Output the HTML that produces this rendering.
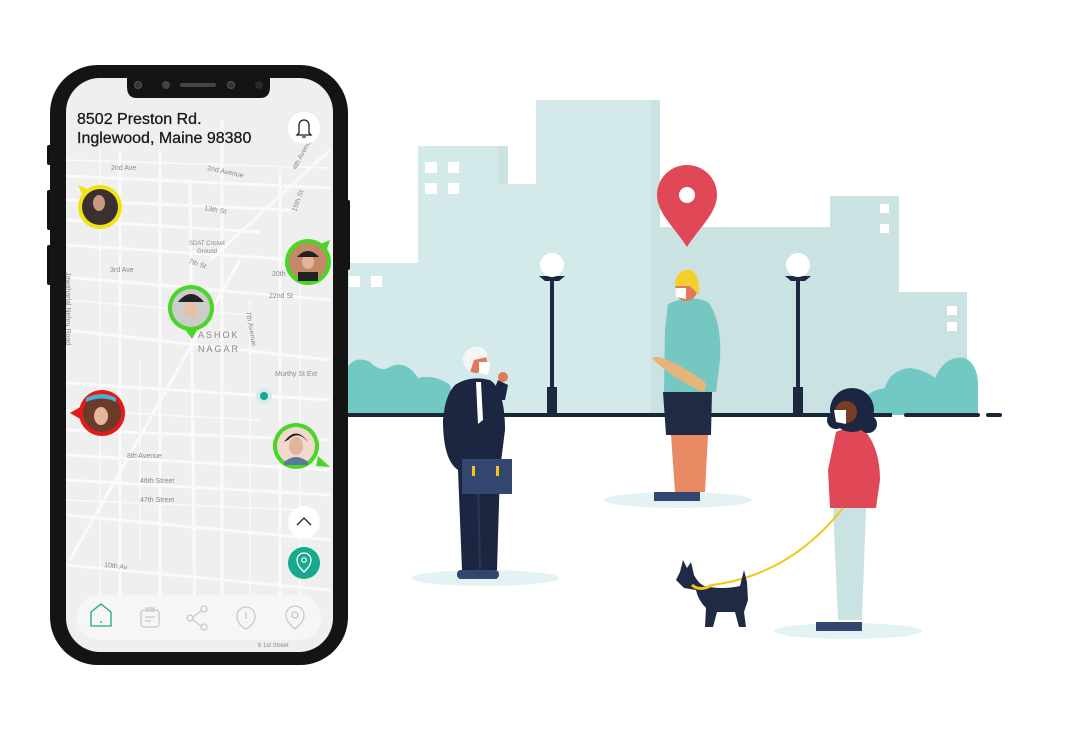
<!DOCTYPE html>
<html><head><meta charset="utf-8"><style>
html,body{margin:0;padding:0;background:#fff;width:1077px;height:735px;overflow:hidden;font-family:"Liberation Sans",sans-serif}
.abs{position:absolute}
</style></head><body>
<svg class="abs" style="left:0;top:0" width="1077" height="735" viewBox="0 0 1077 735">
<!-- city -->
<g fill="#d4eaea">
<rect x="340" y="263" width="80" height="152"/>
<rect x="418" y="146" width="90" height="269"/>
<rect x="508" y="184" width="30" height="231"/>
<rect x="536" y="100" width="124" height="315"/>
</g>
<g fill="#cae2e2">
<rect x="498" y="146" width="10" height="38"/>
<rect x="651" y="100" width="9" height="315"/>
<rect x="660" y="227" width="172" height="188"/>
<rect x="830" y="196" width="69" height="219"/>
<rect x="899" y="292" width="68" height="123"/>
</g>
<g fill="#fff">
<rect x="349" y="276" width="11" height="11"/><rect x="371" y="276" width="11" height="11"/>
<rect x="425" y="162" width="12" height="11"/><rect x="448" y="162" width="11" height="11"/>
<rect x="425" y="183" width="12" height="11"/><rect x="448" y="183" width="11" height="11"/>
<rect x="880" y="204" width="9" height="9"/><rect x="880" y="224" width="9" height="9"/>
<rect x="947" y="306" width="10" height="9"/><rect x="947" y="322" width="10" height="9"/>
</g>
<!-- bushes -->
<g fill="#72c8c2">
<path d="M347 415 V368 Q355 355 370 362 Q380 372 388 368 Q405 358 418 378 Q435 374 450 385 L455 415Z"/>
<path d="M855 415 Q860 392 885 388 Q890 370 910 368 Q925 370 935 378 Q945 355 965 358 Q978 365 978 385 L978 415Z"/>
</g>
<!-- lamps -->
<g fill="#1c2840">
<rect x="550" y="277" width="4" height="138"/><rect x="547" y="387" width="10" height="28"/>
<rect x="796" y="277" width="4" height="138"/><rect x="793" y="387" width="10" height="28"/>
<path d="M539 276 H565 L559 281 H545Z"/><path d="M785 276 H811 L805 281 H791Z"/>
</g>
<ellipse cx="552" cy="265" rx="12" ry="12" fill="#fff"/><ellipse cx="798" cy="265" rx="12" ry="12" fill="#fff"/>
<!-- ground -->
<rect x="340" y="413" width="552" height="4" fill="#1b2637"/>
<rect x="904" y="413" width="76" height="4" rx="2" fill="#1b2637"/>
<rect x="986" y="413" width="16" height="4" rx="2" fill="#1b2637"/>
<!-- pin -->
<path d="M687 247 C675 228 657 213 657 195 A30 30 0 0 1 717 195 C717 213 699 228 687 247Z" fill="#e04757"/>
<circle cx="687" cy="195" r="8" fill="#fff"/>
<!-- shadows -->
<ellipse cx="485" cy="578" rx="74" ry="8" fill="#e3f3f3"/>
<ellipse cx="678" cy="500" rx="74" ry="8" fill="#e3f3f3"/>
<ellipse cx="848" cy="631" rx="74" ry="8" fill="#e3f3f3"/>
<!-- old man -->
<path d="M455 385 Q470 375 490 380 Q505 390 505 430 L500 470 L497 570 L462 570 L458 470 Q443 460 443 420 Q445 395 455 385Z" fill="#1c2640"/>
<path d="M478 480 L480 570" stroke="#2a3658" stroke-width="2"/>
<path d="M490 400 L498 380 L508 385 L505 400 Z" fill="#1c2640"/>
<circle cx="503" cy="377" r="5" fill="#e07a5c"/>
<path d="M476 382 L481 382 L483 420 L478 424Z" fill="#fff"/>
<circle cx="476" cy="362" r="11" fill="#e07a5c"/>
<path d="M463 358 Q466 345 480 347 Q488 350 487 357 L474 360 L470 372 Q463 368 463 358Z" fill="#f5f5f5"/>
<path d="M479 362 L490 362 L488 375 L479 373Z" fill="#fff"/>
<rect x="462" y="459" width="50" height="35" fill="#33466f"/>
<rect x="472" y="466" width="3" height="10" fill="#f5c518"/><rect x="496" y="466" width="3" height="10" fill="#f5c518"/>
<rect x="457" y="570" width="42" height="9" rx="4" fill="#33466f"/>
<!-- middle man -->
<path d="M668 304 Q690 294 708 302 Q722 320 720 360 L716 392 L664 392 L665 330Z" fill="#74c8c1"/>
<path d="M663 392 H712 L711 435 H666Z" fill="#1f2a44"/>
<path d="M671 435 H708 L705 492 H675Z" fill="#e88a63"/>
<path d="M654 492 H700 L700 501 H654Z" fill="#33466f"/>
<path d="M652 358 Q662 352 705 382 Q708 390 702 392 Q668 375 652 358Z" fill="#e5b47a"/>
<circle cx="686" cy="290" r="11" fill="#e07a5c"/>
<path d="M675 282 Q678 268 692 270 Q700 276 699 295 L690 286 L676 286Z" fill="#f3cf2c"/>
<path d="M675 288 L686 288 L686 299 L676 297Z" fill="#fff"/>
<!-- woman -->
<path d="M836 432 Q850 425 866 432 Q880 450 880 480 L876 508 L830 508 L828 470Z" fill="#e04757"/>
<path d="M833 508 H866 L862 620 H838Z" fill="#c9e2e2"/>
<path d="M816 622 H862 V631 H816Z" fill="#33466f"/>
<circle cx="852" cy="410" r="22" fill="#1b2640"/><circle cx="836" cy="420" r="9" fill="#1b2640"/><circle cx="868" cy="424" r="9" fill="#1b2640"/>
<circle cx="846" cy="412" r="11" fill="#7a3d24"/>
<path d="M834 410 L846 410 L846 424 L836 422Z" fill="#fff"/>
<path d="M843 508 Q790 575 712 585" stroke="#f5c518" stroke-width="2" fill="none"/>
<!-- dog -->
<path d="M683 560 L687 568 L691 562 L694 575 Q698 583 704 586 Q722 590 740 586 L744 570 L747 582 L748 600 L744 612 L746 627 L739 627 L735 612 L717 612 L713 627 L705 627 L706 608 Q698 600 696 590 L684 588 L676 580 L680 572Z" fill="#1f2a44"/>
<path d="M692 585 Q700 592 712 585" stroke="#f5c518" stroke-width="3" fill="none"/>
<!-- phone -->
<rect x="47" y="145" width="4" height="20" rx="2" fill="#111"/>
<rect x="47" y="190" width="4" height="40" rx="2" fill="#111"/>
<rect x="47" y="245" width="4" height="40" rx="2" fill="#111"/>
<rect x="346" y="200" width="4" height="70" rx="2" fill="#111"/>
<rect x="50" y="65" width="298" height="600" rx="48" fill="#141414"/>
<rect x="66" y="78" width="267" height="574" rx="34" fill="#efefef"/>
<clipPath id="sc"><rect x="66" y="78" width="267" height="574" rx="34"/></clipPath>
<g clip-path="url(#sc)" stroke="#fafafa" fill="none">
<g stroke-width="3">
<path d="M66 176 L330 188"/><path d="M66 200 L290 210"/><path d="M66 220 L260 232"/><path d="M66 277 L330 300"/>
<path d="M66 330 L330 360"/><path d="M66 383 L330 400"/><path d="M66 455 L330 470"/><path d="M66 565 L330 590"/>
<path d="M66 515 L330 540"/><path d="M210 260 L330 150"/><path d="M70 560 L240 260"/>
<path d="M120 150 V640"/><path d="M160 150 V640"/><path d="M222 120 V640"/><path d="M280 170 V640"/><path d="M190 180 L195 640"/>
<path d="M66 480 L330 495"/><path d="M66 430 L330 440"/><path d="M66 245 L300 260"/>
</g>
<g stroke-width="1.5">
<path d="M66 160 L330 168"/><path d="M140 360 V560"/><path d="M250 300 V640"/><path d="M66 410 L260 420"/><path d="M66 300 L250 315"/>
<path d="M100 150 V640"/><path d="M300 250 V640"/><path d="M66 500 L300 510"/>
</g>
</g>
<g font-size="7" fill="#8a8a8a">
<text x="111" y="170">2nd Ave</text><text x="207" y="170" transform="rotate(12 207 170)">2nd Avenue</text>
<text x="204" y="210" transform="rotate(10 204 210)">13th St</text>
<text x="189" y="245" font-size="6">SDAT Cricket</text><text x="197" y="253" font-size="6">Ground</text>
<text x="188" y="263" transform="rotate(18 188 263)">7th St</text><text x="110" y="272">3rd Ave</text>
<text x="272" y="276">20th</text><text x="269" y="298">22nd St</text>
<text x="198" y="338" font-size="9" letter-spacing="2">ASHOK</text><text x="198" y="352" font-size="9" letter-spacing="2">NAGAR</text>
<text x="275" y="376">Murthy St Ext</text><text x="127" y="458">8th Avenue</text>
<text x="140" y="483">46th Street</text><text x="140" y="502">47th Street</text>
<text x="104" y="567" transform="rotate(6 104 567)">10th Av</text>
<text x="258" y="647" font-size="6">6 1st Street</text>
<text x="66" y="272" transform="rotate(90 66 272)">Jawaharlal Nehru Road</text>
<text x="246" y="312" transform="rotate(80 246 312)">7th Avenue</text>
<text x="296" y="170" transform="rotate(-62 296 170)">4th Avenue</text>
<text x="296" y="212" transform="rotate(-70 296 212)">15th St</text>
</g>
<path d="M127 77 H270 V87 Q270 98 260 98 H137 Q127 98 127 87Z" fill="#141414"/>
<circle cx="138" cy="85" r="3.5" fill="#333" stroke="#555"/><circle cx="166" cy="85" r="4" fill="#444"/>
<rect x="180" y="83" width="36" height="4" rx="2" fill="#444"/>
<circle cx="231" cy="85" r="3.5" fill="#333" stroke="#555"/><circle cx="259" cy="85" r="4" fill="#2a2a2a"/>
<rect x="276" y="82" width="5" height="10" rx="1" fill="#eee"/>
<text x="288" y="91" font-size="10" fill="#eee">04:21</text>
<text x="77" y="124" font-size="16" fill="#1a1a1a" stroke="#1a1a1a" stroke-width="0.3">8502 Preston Rd.</text>
<text x="77" y="143" font-size="16" fill="#1a1a1a" stroke="#1a1a1a" stroke-width="0.3">Inglewood, Maine 98380</text>
<circle cx="304" cy="128" r="16" fill="#fff"/>
<path d="M299 133 V125 A5 5 0 0 1 309 125 V133 L311 135 H297Z M302 137 H306" stroke="#222" stroke-width="1.3" fill="none"/>
<!-- avatars -->
<g>
<path d="M78 185 L90 190 L85 200Z" fill="#f2e312"/><circle cx="100" cy="207" r="22" fill="#f2e312"/><circle cx="100" cy="207" r="18" fill="#3a3030"/><ellipse cx="99" cy="203" rx="6" ry="8" fill="#c99a80"/>
<path d="M330 240 L318 245 L325 255Z" fill="#4ad624"/><circle cx="308" cy="262" r="23" fill="#4ad624"/><circle cx="308" cy="262" r="19" fill="#c48968"/><ellipse cx="308" cy="262" rx="6" ry="7" fill="#e2b59a"/><path d="M297 257 Q308 245 319 257Z" fill="#222"/><rect x="298" y="272" width="20" height="9" fill="#222"/>
<path d="M184 328 L192 339 L198 328Z" fill="#4ad624"/><circle cx="191" cy="308" r="23" fill="#4ad624"/><circle cx="191" cy="308" r="19" fill="#ccc"/><ellipse cx="191" cy="310" rx="7" ry="8" fill="#e8c0a6"/><path d="M178 302 Q191 286 204 302Z" fill="#222"/>
<path d="M70 413 L82 406 L82 420Z" fill="#e21b1b"/><circle cx="102" cy="413" r="23" fill="#e21b1b"/><circle cx="102" cy="413" r="19" fill="#6a3b2a"/><ellipse cx="101" cy="416" rx="7" ry="9" fill="#e6b59a"/><path d="M86 402 Q102 395 116 402 L116 398 Q102 390 86 398Z" fill="#4ab0d6"/>
<path d="M316 466 L330 467 L318 456Z" fill="#4ad624"/><circle cx="296" cy="446" r="23" fill="#4ad624"/><circle cx="296" cy="446" r="19" fill="#f1d9cf"/><ellipse cx="296" cy="446" rx="7" ry="9" fill="#e2b59a"/><path d="M284 442 Q296 425 308 442 L304 438 Q296 432 288 440Z" fill="#222"/><path d="M284 462 Q296 452 308 462 L308 465 H284Z" fill="#5a7a9a"/>
</g>
<circle cx="264" cy="396" r="8" fill="#d7ecea"/><circle cx="264" cy="396" r="4" fill="#14a88f"/>
<circle cx="304" cy="522" r="16" fill="#fff"/><path d="M297 525 L304 518 L311 525" stroke="#333" stroke-width="1.5" fill="none"/>
<circle cx="304" cy="563" r="16" fill="#17a88e"/><path d="M304 572 C299 567 297 564 297 560 A7 7 0 0 1 311 560 C311 564 309 567 304 572Z" stroke="#fff" stroke-width="1.3" fill="none"/><circle cx="304" cy="560" r="2.3" stroke="#fff" stroke-width="1.2" fill="none"/>
<rect x="77" y="595" width="244" height="45" rx="22" fill="#f6f6f6" opacity="0.95"/>
<g stroke-width="1.3" fill="none">
<path d="M91 612 L101 604 L111 612 V626 H91Z" stroke="#19a88e"/><path d="M101 621 V623" stroke="#19a88e"/>
<g stroke="#c9c9c9">
<rect x="141" y="610" width="18" height="17" rx="3"/><rect x="146" y="608" width="8" height="3"/><path d="M145 617 H155 M145 621 H151"/>
<circle cx="190" cy="618" r="3"/><circle cx="204" cy="609" r="3"/><circle cx="204" cy="627" r="3"/><path d="M193 617 L201 611 M193 620 L201 626"/>
<path d="M246 629 C240 626 237 622 237 616 A9 9 0 0 1 255 616 C255 622 252 626 246 629Z"/><path d="M246 612 V619 M246 622 V623"/>
<path d="M295 629 C289 624 286 620 286 615 A9 9 0 0 1 304 615 C304 620 301 624 295 629Z"/><circle cx="295" cy="615" r="3"/>
</g></g>
</svg>
</body></html>
